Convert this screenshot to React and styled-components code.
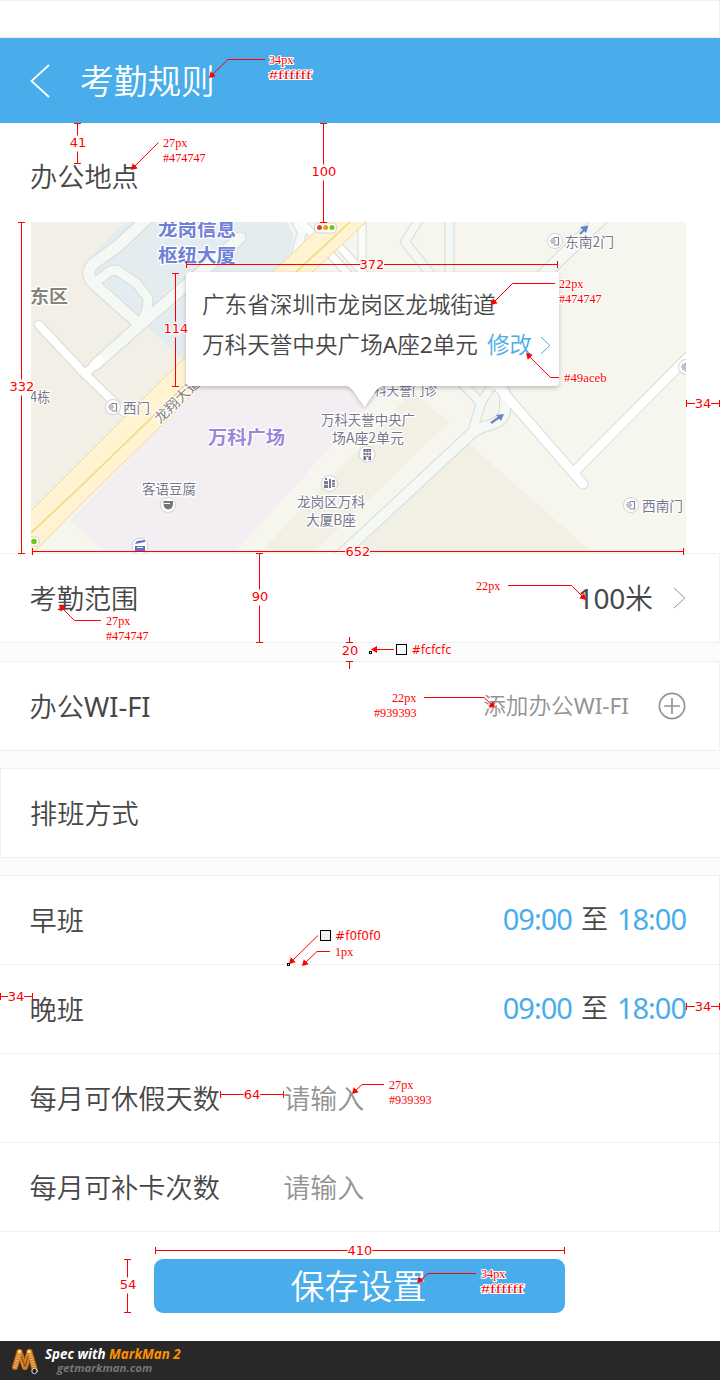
import React from "react";
import styled, { createGlobalStyle } from "styled-components";

const BLUE = "#49aceb";
const INK = "#474747";
const MUTED = "#939393";
const LINE = "#f0f0f0";
const RED = "#ff0000";

const GlobalStyle = createGlobalStyle`
  body { margin: 0; background: #fff; }
  * { box-sizing: border-box; }
`;

const Page = styled.div`
  position: relative;
  display: flex;
  flex-direction: column;
  width: 720px;
  height: 1380px;
  overflow: hidden;
  background: #fff;
  color: ${INK};
  font-family: "Noto Sans", "Noto Sans CJK SC", sans-serif;
  font-weight: 350;
`;

const StatusBar = styled.div`
  height: 38px;
  border: 1px solid ${LINE};
  border-left: 0;
`;

const Header = styled.header`
  display: flex;
  align-items: center;
  gap: 30px;
  height: 85px;
  padding: 1px 0 0 30px;
  background: ${BLUE};
`;

const Title = styled.h1`
  margin: 0;
  color: #fff;
  font-size: 33.7px;
  line-height: 40px;
  font-weight: inherit;
`;

const LocationSection = styled.section`
  display: flex;
  flex-direction: column;
  height: 430px;
`;

const SectionHead = styled.div`
  display: flex;
  align-items: center;
  height: 99px;
  padding: 9px 0 0 30px;
`;

const Label = styled.span`
  font-size: 27.2px;
  line-height: 36px;
  white-space: nowrap;
`;

const Latin = styled.span`
  font-weight: 400;
  letter-spacing: ${(p) => p.$track || 0}px;
`;

const MapFrame = styled.div`
  position: relative;
  width: 655px;
  height: 331px;
  margin-left: 31px;
  svg { display: block; }
`;

const Bubble = styled.div`
  position: absolute;
  left: 155px;
  top: 50px;
  width: 373px;
  height: 114px;
  padding: 13px 0 0 16px;
  border-radius: 4px;
  background: #fff;
  box-shadow: 0 2px 4px rgba(0, 0, 0, 0.22);
`;

const BubbleTail = styled.svg`
  position: absolute;
  left: 158px;
  top: 110px;
`;

const BubbleLine = styled.div`
  display: flex;
  align-items: center;
  height: 40px;
  font-size: 22.6px;
  line-height: 40px;
  white-space: nowrap;
`;

const EditLink = styled.a`
  display: flex;
  align-items: center;
  gap: 8px;
  margin-left: 9px;
  color: ${BLUE};
`;

const Group = styled.section`
  margin-bottom: ${(p) => p.$gap}px;
  border-top: 1px solid ${LINE};
  border-right: ${(p) => (p.$left ? "0" : `1px solid ${LINE}`)};
  border-left: ${(p) => (p.$left ? `1px solid ${LINE}` : "0")};
  background: #fff;
`;

const Groups = styled.div`
  height: 679px;
  background: #fcfcfc;
`;

const Row = styled.div`
  display: flex;
  align-items: center;
  height: 89px;
  padding: 1px 33px 0 ${(p) => p.$pad || 29.5}px;
  border-bottom: 1px solid ${LINE};
`;

const Value = styled.span`
  display: flex;
  align-items: center;
  margin-left: auto;
  margin-top: ${(p) => p.$lift || 0}px;
  font-size: 28px;
  line-height: 36px;
  white-space: nowrap;
`;

const Hint = styled(Value)`
  font-size: 22.6px;
  color: ${MUTED};
`;

const Spacer = styled.i`
  width: ${(p) => p.$width}px;
`;

const Time = styled.span`
  color: ${BLUE};
  font-size: 29px;
  font-weight: 380;
  letter-spacing: -1px;
`;

const Until = styled.span`
  margin: 0 9px;
  font-size: 27px;
`;

const Placeholder = styled.span`
  margin-left: 63.5px;
  color: ${MUTED};
  font-size: 27px;
  line-height: 36px;
`;

const Actions = styled.div`
  display: flex;
  justify-content: center;
  height: 109px;
  padding: 27px 1px 0 0;
`;

const SaveButton = styled.button`
  width: 411px;
  height: 54px;
  padding: 0 2px 0 0;
  border: 0;
  border-radius: 9px;
  background: ${BLUE};
  color: #fff;
  font-family: inherit;
  font-size: 34px;
  font-weight: inherit;
  line-height: 54px;
`;

const Footer = styled.footer`
  display: flex;
  align-items: flex-start;
  height: 39px;
  padding: 6px 0 0 10px;
  background: #282828;
`;

const Credit = styled.div`
  display: flex;
  flex-direction: column;
  margin-left: 5px;
  color: #fff;
  font: italic 700 13.4px/15px "Open Sans", sans-serif;
  white-space: nowrap;
`;

const Brand = styled.span`
  color: #ff9200;
`;

const Site = styled.span`
  padding-left: 12px;
  color: #777;
  font-size: 11.4px;
  line-height: 11px;
`;

const Overlay = styled.svg`
  position: absolute;
  left: 0;
  top: 0;
  font-weight: 400;
  pointer-events: none;
`;

function Chevron({ width, height, color, stroke, back }) {
  const d = back
    ? `M${width - 1} 1L1.5 ${height / 2}L${width - 1} ${height - 1}`
    : `M1 1L${width - 1.2} ${height / 2}L1 ${height - 1}`;
  return (
    <svg width={width} height={height} fill="none" stroke={color} strokeWidth={stroke}>
      <path d={d} />
    </svg>
  );
}

const ROADS = [
  { d: "M150 216L118 246L93 264Q84 274 94 284L140 325", w: 11, c: "#f4f9f6" },
  { d: "M97 281L110 271L117 270L136 283L148 298L147 310L140 325", w: 9, c: "#f4f9f6" },
  { d: "M96 364L140 325L205 269L240 238", w: 11, c: "#f4f9f6" },
  { d: "M449.500 215V285", w: 8, c: "#f4f9f6" },
  { d: "M421 216L405 242L432 276", w: 8, c: "#f4f9f6" },
  { d: "M293 216L302 232L294 262", w: 8, c: "#f8faf7" },
  { d: "M362 216V260", w: 7, c: "#fbfcfa" },
  { d: "M298 218L350 276", w: 7, c: "#fdfdfb" },
  { d: "M330 236L366 276", w: 7, c: "#fdfdfb" },
  { d: "M604 216L538 280", w: 12, c: "#f4f9f6" },
  { d: "M330 565L472 433Q478 428 490 425Q506 420 505 408V392L485 370", w: 10, c: "#f4f9f6" },
  { d: "M472 433L481 403L459 380M481 403L492 385", w: 8, c: "#f4f9f6" },
  { d: "M488 375L583 484", w: 9, c: "#fff" },
  { d: "M692 353L575 471", w: 9, c: "#fff" },
  { d: "M39 325L85 374L124 412M85 374L100 360", w: 8, c: "#fff" },
];

function GateIcon({ x, y }) {
  return (
    <g transform={`translate(${x} ${y})`}>
      <circle r="7.500" fill="#fff" stroke="#d2d2d6" />
      <path d="M-1.500 -3.500H3.500V4H-1.500M-5 0H1M-4 -2H0M-4 2H0" fill="none" stroke="#85859a" strokeWidth="1.200" />
    </g>
  );
}

function MapLabel({ x, y, w, size = 14, color = "#77778c", weight = 400, rotate, children }) {
  return (
    <text
      x={x} y={y} textLength={w} lengthAdjust="spacingAndGlyphs" fontSize={size} fill={color} fontWeight={weight}
      stroke="#fff" strokeWidth="2.500" strokeLinejoin="round" paintOrder="stroke"
      transform={rotate ? `rotate(${rotate} ${x} ${y})` : undefined}
    >
      {children}
    </text>
  );
}

function MapArt() {
  return (
    <svg width="655" height="331" viewBox="31 222 655 331" fontFamily='"Noto Sans CJK SC", sans-serif'>
      <rect x="31" y="222" width="655" height="331" fill="#f6f5ee" />
      <path d="M31 222H160L200 380L31 530Z" fill="#f2efe6" />
      <path d="M148 222L85 262L150 330L186 362L230 320L288 262L294 236L287 222Z" fill="#e3ecee" />
      <path d="M148 222L126 222L85 262Z" fill="#e3ecee" />
      <path d="M70 520L200 386H388L362 412L237 550L230 553H105Z" fill="#f2eef2" />
      <path d="M260 553L412 392L449 422L313 553Z" fill="#f2efe4" />
      <path d="M353 553L468 443L593 553Z" fill="#f2efe4" />
      <g fill="none" strokeLinecap="round" strokeLinejoin="round">
        {ROADS.map((r) => <path key={r.d} d={r.d} stroke="#d9dbd5" strokeWidth={r.w + 2} />)}
        {ROADS.map((r) => <path key={r.d} d={r.d} stroke={r.c} strokeWidth={r.w} />)}
      </g>
      <path d="M30 512L80 462L162 380L273 272L326 221H367L308 276L200 387L160 427L80 505L33 553H30Z" fill="#fff3d1" stroke="#efdc8e" />
      <path d="M31 533L80 487L175 395L296 272L350 222" fill="none" stroke="#efdb83" strokeWidth="1.700" />
      <MapLabel x={158} y={236} w={78} size={18} color="#6f80d8" weight={700}>龙岗信息</MapLabel>
      <MapLabel x={158} y={262} w={78} size={18} color="#6f80d8" weight={700}>枢纽大厦</MapLabel>
      <MapLabel x={30} y={303} w={38} size={18} color="#85837a" weight={700}>东区</MapLabel>
      <MapLabel x={30} y={402} w={20}>4栋</MapLabel>
      <GateIcon x={113} y={407} />
      <MapLabel x={123} y={413} w={27}>西门</MapLabel>
      <MapLabel x={160} y={424} w={58} rotate={-44} color="#85837a">龙翔大道</MapLabel>
      <MapLabel x={208} y={444} w={77} size={18} color="#9c86d8" weight={700}>万科广场</MapLabel>
      <MapLabel x={142} y={494} w={54}>客语豆腐</MapLabel>
      <MapLabel x={374} y={395} w={63}>科天誉门诊</MapLabel>
      <MapLabel x={321} y={425} w={94}>万科天誉中央广</MapLabel>
      <MapLabel x={332} y={443} w={72}>场A座2单元</MapLabel>
      <MapLabel x={297} y={507} w={68}>龙岗区万科</MapLabel>
      <MapLabel x={306} y={525} w={50}>大厦B座</MapLabel>
      <GateIcon x={555} y={241} />
      <MapLabel x={565} y={247} w={49}>东南2门</MapLabel>
      <GateIcon x={631} y={505} />
      <MapLabel x={642} y={511} w={41}>西南门</MapLabel>
      <GateIcon x={686} y={367} />
      <g fill="#fff" stroke="#d2d2d6">
        <circle cx="168" cy="505" r="7.500" />
        <circle cx="140" cy="546" r="8" />
        <circle cx="367" cy="454" r="8" />
        <circle cx="329.500" cy="483.500" r="8" />
        <rect x="314.500" y="223" width="22" height="10" rx="4" />
        <rect x="24" y="537" width="15" height="9" rx="3" />
      </g>
      <path d="M163.500 501H173V504Q173 509 168 509.500Q164 509 163.500 504Z" fill="#77776f" />
      <path d="M164 503.500H170" stroke="#fff" />
      <path d="M135 546H145V552H135ZM135 544L137 541L145 540V542Z" fill="#6470be" />
      <path d="M137 547.500H143" stroke="#fff" />
      <path d="M363.500 449H371V460H368.500V457H366V460H363.500Z" fill="#6c6c84" />
      <path d="M366 450V457M369 450V457M363 452.500H371M363 455.500H371" stroke="#fff" strokeWidth=".8" />
      <path d="M324 481H328V488H324ZM325 478H327V480H325ZM329 479H331V488H329ZM332 480H335V487H332Z" fill="#7a7a90" />
      <path d="M324 484.500H328M332 482.500H335M332 485H335" stroke="#fff" strokeWidth=".7" />
      <circle cx="319.500" cy="227.500" r="2.500" fill="#e0452b" />
      <circle cx="325.700" cy="227.500" r="2.500" fill="#f59a14" />
      <circle cx="332" cy="227.500" r="2.500" fill="#6fc814" />
      <circle cx="34" cy="541.500" r="2.800" fill="#6fc814" />
      <g stroke="#6a82c4" strokeWidth="2.200" fill="#6a82c4">
        <path d="M491 423L501 416" /><path d="M496 415L504 414L501 421Z" stroke="none" />
        <path d="M580 234L586 228" /><path d="M580 227L588.500 225.500L586 233Z" stroke="none" />
      </g>
    </svg>
  );
}

/* Horizontal and vertical dimension lines: start, end, position, label. */
const WIDTHS = [
  { a: 186, b: 558, y: 264.5, n: "372", x: 372 },
  { a: 32, b: 684, y: 551.5, n: "652", x: 358 },
  { a: 686, b: 720, y: 403.5, n: "34", x: 703 },
  { a: 0, b: 33, y: 996.5, n: "34", x: 16 },
  { a: 686, b: 720, y: 1006.5, n: "34", x: 703 },
  { a: 220, b: 284, y: 1094.5, n: "64", x: 252 },
  { a: 155, b: 565, y: 1250.5, n: "410", x: 360 },
];

const HEIGHTS = [
  { a: 123, b: 163, x: 77.5, n: "41", y: 143 },
  { a: 123, b: 222, x: 323.5, n: "100", y: 172 },
  { a: 222, b: 553, x: 21.5, n: "332", y: 387 },
  { a: 273, b: 386, x: 175.5, n: "114", y: 329 },
  { a: 553, b: 642, x: 259.5, n: "90", y: 597 },
  { a: 1259, b: 1312, x: 127.5, n: "54", y: 1285 },
];

/* Leader lines end in an arrow head whose corner sits at (x, y). */
const LEADERS = [
  { d: "M265 59.500H228L213 74", x: 209, y: 78, r: 135 },
  { d: "M158.500 142.500L135 166", x: 131, y: 170, r: 135 },
  { d: "M555 283.500H512.500L495 301", x: 491, y: 305, r: 135 },
  { d: "M559 377.500H550.500L530 357", x: 526, y: 353, r: 225 },
  { d: "M508 585.500H571.500L583 597", x: 586, y: 600, r: 45 },
  { d: "M101 620.500H74.500L63 609", x: 59, y: 605, r: 225 },
  { d: "M394 649.500H376", x: 371, y: 649.5, r: 180 },
  { d: "M424 697.500H484L492 705", x: 495, y: 708, r: 45 },
  { d: "M318 935.500L293 960", x: 289, y: 964, r: 135 },
  { d: "M330 951.500H317L306 962", x: 302, y: 966, r: 135 },
  { d: "M384 1084.500H362L356 1090", x: 352, y: 1094, r: 135 },
  { d: "M476 1273.500H428L421 1280", x: 417, y: 1283, r: 135 },
];

const NOTES = [
  [269, 64, "34px"], [269, 79, "#ffffff"],
  [163, 147, "27px"], [163, 162, "#474747"],
  [559, 288, "22px"], [559, 303, "#474747"],
  [564, 382, "#49aceb"],
  [476, 590, "22px"],
  [106, 625, "27px"], [106, 640, "#474747"],
  [392, 702, "22px"], [374, 717, "#939393"],
  [335, 956, "1px"],
  [389, 1089, "27px"], [389, 1104, "#939393"],
  [481, 1278, "34px"], [481, 1293, "#ffffff"],
];

const numberWidth = (n) => n.length * 8;

function Annotations() {
  return (
    <Overlay width="720" height="1380" viewBox="0 0 720 1380">
      <g stroke={RED} fill="none">
        {WIDTHS.map(({ a, b, y, n, x }) => {
          const h = numberWidth(n) / 2;
          return <path key={`${a}-${y}`} d={`M${a} ${y}H${x - h}M${x + h} ${y}H${b}M${a + 0.5} ${y - 3.5}v7M${b - 0.5} ${y - 3.5}v7`} />;
        })}
        {HEIGHTS.map(({ a, b, x, y }) => (
          <path key={`${x}-${a}`} d={`M${x} ${a}V${y - 7.5}M${x} ${y + 8.5}V${b}M${x - 3.5} ${a + 0.5}h7M${x - 3.5} ${b + 0.5}h7`} />
        ))}
        <path d="M349.500 637V642M346 642.500h7M346 661.500h7M349.500 662V669" />
      </g>
      <g stroke={RED} fill="none">
        {LEADERS.map((l) => <path key={l.d} d={l.d} />)}
      </g>
      <g fill={RED}>
        {LEADERS.map((l) => (
          <path key={l.d} d="M0 0L-6 -3.500V3.500Z" transform={`translate(${l.x} ${l.y}) rotate(${l.r})`} />
        ))}
      </g>
      <g fill="#fcfcfc" stroke="#000" shapeRendering="crispEdges">
        <rect x="396.500" y="644.500" width="10" height="10" />
        <rect x="369.500" y="651.500" width="2" height="2" />
        <rect x="320.500" y="930.500" width="10" height="10" fill="#f0f0f0" />
        <rect x="287.500" y="963.500" width="2" height="2" />
      </g>
      <g fill={RED} stroke="#fff" strokeWidth="2" strokeLinejoin="round" paintOrder="stroke" fontFamily='"DejaVu Sans", sans-serif' fontSize="13" textAnchor="middle">
        {WIDTHS.map(({ y, n, x }) => <text key={`${x}-${y}`} x={x} y={y + 4}>{n}</text>)}
        {HEIGHTS.map(({ y, n, x }) => <text key={`${x}-${y}`} x={x + 0.5} y={y + 4}>{n}</text>)}
        <text x="350" y="655">20</text>
        <text x="431.500" y="654" textLength="40" lengthAdjust="spacingAndGlyphs">#fcfcfc</text>
        <text x="358" y="940" textLength="46" lengthAdjust="spacingAndGlyphs">#f0f0f0</text>
      </g>
      <g fill={RED} stroke="#fff" strokeWidth="2" strokeLinejoin="round" paintOrder="stroke" fontFamily='"Liberation Serif", serif' fontSize="12">
        {NOTES.map(([x, y, t]) => <text key={`${x}-${y}`} x={x} y={y} textLength={t.length * 6.1} lengthAdjust="spacingAndGlyphs">{t}</text>)}
      </g>
    </Overlay>
  );
}

function SpringLogo() {
  return (
    <svg width="30" height="30" fill="none" strokeLinecap="round" strokeLinejoin="round">
      <g stroke="#8a4e12" strokeWidth="6.500"><path d="M5 20L9.500 5" /><path d="M9.500 5L15 20L19.500 5" /><path d="M19.500 5L24.500 22" /></g>
      <g stroke="#d08228" strokeWidth="5"><path d="M5 20L9.500 5" /><path d="M9.500 5L14.500 20" /><path d="M19.500 5L15 20" /><path d="M19.500 5L24.500 22" /></g>
      <g stroke="#ffc673" strokeWidth="3.500" strokeDasharray=".8 1.600" strokeLinecap="butt"><path d="M5 21L9.500 5" /><path d="M19.500 5L24.500 21" /></g>
      <path d="M11.500 10L15 19.500L18 10" stroke="#8e5214" strokeWidth="1.200" />
      <circle cx="9.500" cy="4.500" r="1.600" fill="#ffe0a8" />
      <circle cx="19" cy="4.500" r="1.600" fill="#ffe0a8" />
      <circle cx="24.500" cy="24" r="2.700" fill="#222" stroke="#ddd" />
    </svg>
  );
}

const SHIFTS = ["早班", "晚班"];
const QUOTAS = ["每月可休假天数", "每月可补卡次数"];

export default function App() {
  return (
    <Page>
      <GlobalStyle />
      <StatusBar />
      <Header>
        <Chevron back width={20} height={34} color="#fff" stroke={1.8} />
        <Title>考勤规则</Title>
      </Header>
      <LocationSection>
        <SectionHead><Label>办公地点</Label></SectionHead>
        <MapFrame>
          <MapArt />
          <Bubble>
            <BubbleTail width="42" height="30">
              <path d="M3 4Q8 6 12 13L20.500 25L29 13Q33 6 38 4Z" fill="#fff" style={{ filter: "drop-shadow(0 1px 2px rgba(0,0,0,.22))" }} />
              <path d="M0 0H42V4H0Z" fill="#fff" />
            </BubbleTail>
            <BubbleLine>广东省深圳市龙岗区龙城街道</BubbleLine>
            <BubbleLine>
              <span>万科天誉中央广场<Latin>A</Latin>座<Latin>2</Latin>单元</span>
              <EditLink>修改<Chevron width={11} height={19} color={BLUE} stroke={1} /></EditLink>
            </BubbleLine>
          </Bubble>
        </MapFrame>
      </LocationSection>
      <Groups>
        <Group $gap={18}>
          <Row>
            <Label>考勤范围</Label>
            <Value $lift={-1}><Latin $track={-0.3}>100</Latin>米<Spacer $width={20} /><Chevron width={13} height={22} color={MUTED} stroke={1} /></Value>
          </Row>
        </Group>
        <Group $gap={17}>
          <Row>
            <Label>办公<Latin>WI-FI</Latin></Label>
            <Hint $lift={-1}>添加办公<Latin>WI-FI</Latin><Spacer $width={29} />
              <svg width="28" height="28" fill="none" stroke={MUTED} strokeWidth="1.700">
                <circle cx="14" cy="14" r="12.600" />
                <path d="M6 14H22M14 6V22" />
              </svg>
            </Hint>
          </Row>
        </Group>
        <Group $gap={17} $left>
          <Row $pad={29}><Label>排班方式</Label></Row>
        </Group>
        <Group $gap={0}>
          {SHIFTS.map((name) => (
            <Row key={name}>
              <Label>{name}</Label>
              <Value $lift={-4}><Time>09:00</Time><Until>至</Until><Time>18:00</Time></Value>
            </Row>
          ))}
          {QUOTAS.map((name) => (
            <Row key={name}>
              <Label>{name}</Label>
              <Placeholder>请输入</Placeholder>
            </Row>
          ))}
        </Group>
      </Groups>
      <Actions><SaveButton>保存设置</SaveButton></Actions>
      <Footer>
        <SpringLogo />
        <Credit>
          <span>Spec with <Brand>MarkMan 2</Brand></span>
          <Site>getmarkman.com</Site>
        </Credit>
      </Footer>
      <Annotations />
    </Page>
  );
}
